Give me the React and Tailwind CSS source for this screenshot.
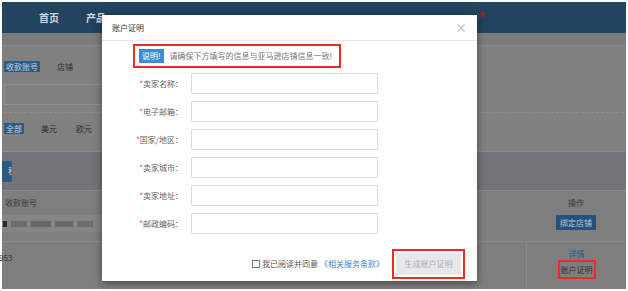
export default function App() {
  const fields = ['卖家名称', '电子邮箱', '国家/地区', '卖家城市', '卖家地址', '邮政编码'];

  return (
    <div
      className="relative w-[628px] h-[291px] overflow-hidden bg-white p-[2px]"
      style={{ fontFamily: '"Noto Sans CJK SC", "Noto Sans", sans-serif' }}
    >
      <div className="flex flex-col h-full bg-[#7b7b7b]">
        {/* Top nav */}
        <div className="h-[31px] shrink-0 bg-[#22445f] flex items-center">
          <span className="ml-[37px] text-[10px] font-bold text-[#d2d9e0]">首页</span>
          <span className="ml-[27px] text-[10px] font-bold text-[#d2d9e0]">产品</span>
        </div>

        {/* Filter panel */}
        <div className="mt-[12px] h-[107px] shrink-0 border-y border-[#8a8a8a] bg-[#808080] px-[2px] flex flex-col">
          <div className="mt-[15px] flex items-center h-[11px]">
            <span className="bg-[#2c5c88] text-[#c6d2dd] text-[8px] leading-[11px] px-[2px]">收款账号</span>
            <span className="ml-[17px] text-[8px] text-[#2e2e2e]">店铺</span>
          </div>
          <div className="mt-[12px] h-[21px] w-[140px] border border-[#8e8e8e] bg-[#7e7e7e]" />
          <div className="mt-[7px] border-t border-dashed border-[#8c8c8c]" />
          <div className="mt-[10px] flex items-center h-[11px]">
            <span className="bg-[#2c5c88] text-[#c6d2dd] text-[8px] leading-[11px] px-[2px]">全部</span>
            <span className="ml-[17px] text-[8px] text-[#2e2e2e]">美元</span>
            <span className="ml-[19px] text-[8px] text-[#2e2e2e]">欧元</span>
          </div>
        </div>

        {/* Toolbar band */}
        <div className="h-[38px] shrink-0 bg-[#727479] flex items-center">
          <div className="h-[21px] w-[10px] bg-[#2b5a85] rounded-r-[2px] flex items-center justify-end overflow-hidden">
            <span className="text-[8px] text-[#c6d2dd] -mr-[4px]">秒</span>
          </div>
        </div>

        {/* Table */}
        <div className="flex-1 bg-[#7e7e7e] border-t border-[#888] flex flex-col">
          <div className="h-[51px] flex border-b border-[#8a8a8a]">
            <div className="flex-1 flex flex-col">
              <span className="ml-[3px] mt-[6px] text-[8px] text-[#3a3a3a]">收款账号</span>
              <div className="mt-[6px] h-[17px] w-[100px] bg-[#858585] flex items-center gap-[4px] pl-[1px]">
                <div className="h-[6px] w-[4px] bg-[#2a2a2a]" />
                <div className="h-[6px] w-[16px] bg-[#6c6c6c]" />
                <div className="h-[6px] w-[20px] bg-[#676767]" />
                <div className="h-[6px] w-[18px] bg-[#6a6a6a]" />
                <div className="h-[6px] w-[16px] bg-[#6d6d6d]" />
              </div>
            </div>
            <div className="w-[100px] flex flex-col items-center">
              <span className="mt-[6px] text-[8px] text-[#3a3a3a]">操作</span>
              <span className="mt-[6px] bg-[#24527c] text-[#b8c6d4] text-[8px] leading-[15px] px-[4px] rounded-[1px]">
                绑定店铺
              </span>
            </div>
          </div>
          <div className="flex-1 flex">
            <div className="flex-1 flex">
              <span className="mt-[10px] -ml-[3px] text-[8px] text-[#2e2e2e]">953</span>
            </div>
            <div className="w-[100px] border-l border-[#8a8a8a] flex flex-col items-center">
              <span className="mt-[7px] text-[8px] leading-[10px] text-[#2f5a86]">详情</span>
              <div className="mt-[1px] border-2 border-[#ee2a22] px-[1px] h-[19px] flex items-center">
                <span className="text-[8px] text-[#2e2e2e]">账户证明</span>
              </div>
            </div>
          </div>
        </div>
      </div>

      {/* Notification dot */}
      <div className="absolute left-[480px] top-[12px] w-[5px] h-[5px] rounded-full bg-[#8e2a2a]" />

      {/* Modal */}
      <div className="absolute left-[102px] top-[15px] w-[375px] h-[266px] bg-white shadow-[0_2px_8px_rgba(0,0,0,0.45)] flex flex-col">
        <div className="h-[26px] shrink-0 border-b border-[#e8e8e8] flex items-center justify-between pl-[10px] pr-[10px]">
          <span className="text-[8px] text-[#333]">账户证明</span>
          <span className="text-[12px] leading-none text-[#b0b0b0]">×</span>
        </div>

        <div className="mt-[3px] ml-[31px] w-[208px] h-[24px] border-2 border-[#ee2a22] flex items-center px-[4px]">
          <span className="bg-[#3d8dd5] text-white text-[8px] leading-[14px] px-[3px]">说明!</span>
          <span className="ml-[6px] text-[8px] text-[#777]">请确保下方填写的信息与亚马逊店铺信息一致!</span>
        </div>

        <div className="mt-[5px] flex flex-col gap-[7px]">
          {fields.map((f) => (
            <div key={f} className="flex items-center h-[21px]">
              <label className="w-[81px] text-right text-[8px] text-[#666]">
                <span className="text-[#e8453c]">*</span>
                {f}：
              </label>
              <div className="ml-[8px] w-[187px] h-[21px] border border-[#dcdcdc] rounded-[1px]" />
            </div>
          ))}
        </div>

        <div className="mt-[15px] mr-[12px] flex items-center justify-end">
          <div className="flex items-center">
            <span className="w-[8px] h-[8px] border border-[#777] bg-white" />
            <span className="ml-[2px] text-[8px] text-[#555]">我已阅读并同意</span>
            <span className="ml-[2px] text-[8px] text-[#3d84cf]">《相关服务条款》</span>
          </div>
          <div className="ml-[8px] border-2 border-[#ee2a22] p-[2px]">
            <div className="w-[65px] h-[22px] bg-[#e6e8ea] flex items-center justify-center text-[8px] text-[#aab0b6]">
              生成账户证明
            </div>
          </div>
        </div>
      </div>
    </div>
  );
}
